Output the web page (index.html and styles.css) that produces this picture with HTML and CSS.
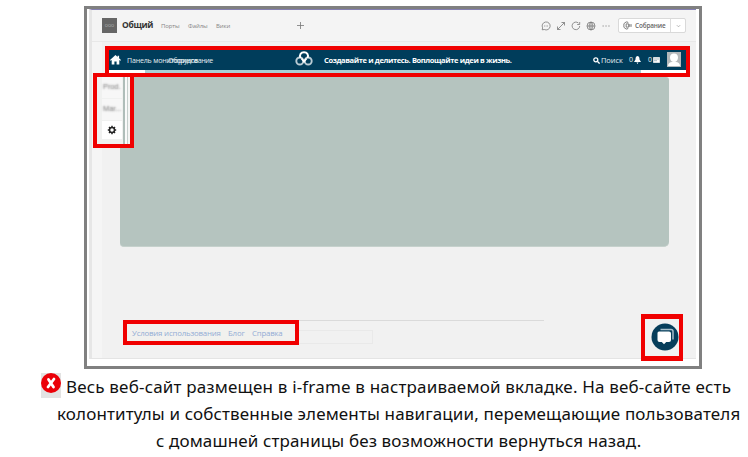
FILE: index.html
```html
<!DOCTYPE html>
<html lang="ru">
<head>
<meta charset="utf-8">
<title>Общий</title>
<link rel="stylesheet" href="styles.css">
</head>
<body>
<figure class="figure">
  <div class="frame">
    <div class="app">
      <header class="topbar">
        <div class="channel-icon">ООО</div>
        <h1 class="channel">Общий</h1>
        <nav class="tabs"><span class="tab-posts">Порты</span><span class="tab-files">Файлы</span><span class="tab-wiki">Вики</span></nav>
        <svg class="plus" viewBox="0 0 7 7"><path d="M3.5 0v7M0 3.5h7"/></svg>
        <div class="tools">
          <svg viewBox="0 0 10 10"><path d="M1.2 8.8l.4-2A4 4 0 1 1 3.3 8.500zM3.2 5h.8M4.700 5h.8M6.200 5h.8"/></svg>
          <svg viewBox="0 0 10 10"><path d="M1.5 8.500l7-7M5.500 1.500h3v3M1.500 5.500v3h3"/></svg>
          <svg viewBox="0 0 10 10"><path d="M8.700 5a3.800 3.800 0 1 1-1.300-3M8.700 1v2.500H6.200"/></svg>
          <svg viewBox="0 0 10 10"><path d="M5 1a4 4 0 1 0 0 8 4 4 0 0 0 0-8zM1 5h8M5 1v8M5 1C2.500 3 2.500 7 5 9M5 1c2.500 2 2.500 6 0 8"/></svg>
          <svg viewBox="0 0 10 10"><path d="M1.500 5h1.300M4.400 5h1.300M7.300 5h1.300"/></svg>
        </div>
        <div class="meet">
          <div class="meet-main"><svg viewBox="0 0 10 10"><path d="M5.500 2V1.300L3.500 1 1 3v4l2.500 2 2-.5V8M3.500 3.200h2.800v3.600H3.500zM7.500 3.500v3M9 3.500v3"/></svg>Собрание</div>
          <div class="meet-more"><svg viewBox="0 0 6 4"><path d="M1 1l2 2 2-2"/></svg></div>
        </div>
      </header>
      <main class="site">
        <div class="navbar">
          <svg class="home" viewBox="0 0 11 10"><path d="M5.500 0L0 5l.7.8 1-.8v4.500h2.700v-3h2.200v3h2.700V5l1 .8.7-.8-1.900-1.700V.8H7.600v1.100z"/></svg>
          <div class="links"><span class="link-panel">Панель мониторинга</span><span class="link-gear">Оборудование</span></div>
          <svg class="knot" viewBox="0 0 18 15"><circle cx="4.800" cy="10" r="3.500"/><circle cx="13.200" cy="10" r="3.500"/><path class="top" d="M5.500 7C4 3.500 6 1.300 9 1.300S14 3.500 12.500 7M6.500 7.500L9 10.500l2.500-3"/></svg>
          <strong class="slogan">Создавайте и делитесь. Воплощайте идеи в жизнь.</strong>
          <div class="status">
            <svg class="search-icon" viewBox="0 0 7 7"><path d="M4.500 4.500L6.600 6.600"/><circle cx="2.800" cy="2.800" r="2"/></svg>
            <span class="search">Поиск</span>
            <span class="count">0</span>
            <svg class="bell" viewBox="0 0 7 8"><path d="M3.500 0C1.500.5 1.500 2 1.500 3.500L0 6h7L5.500 3.500C5.500 2 5.500.5 3.500 0zM2.500 6.500h2L3.500 8z"/></svg>
            <span class="count">0</span>
            <svg class="mail" viewBox="0 0 7 6"><rect width="7" height="6"/><path d="M1 2h5M1 3.700h3"/></svg>
            <svg class="avatar" viewBox="0 0 14 15"><path fill="#b4b8ba" d="M0 0h14v15H0z"/><path fill="#fff" d="M3 5.500C3 3 4.500 1.500 7 1.500S11 3 11 5.500 9.500 10 7 10 3 8 3 5.500zM1 14c0-2.500 2-4 4-4h4c2 0 4 1.500 4 4z"/></svg>
          </div>
        </div>
        <div class="strip"></div>
        <div class="body">
          <aside class="rail">
            <div class="rail-item blurred">Prod.</div>
            <div class="rail-item blurred">Mar...</div>
            <div class="rail-item active"><svg viewBox="0 0 10 10"><path d="M5 .8v8.400M.8 5h8.400M2 2l6 6M8 2L2 8"/><circle cx="5" cy="5" r="2.500"/></svg></div>
          </aside>
          <div class="hero"></div>
        </div>
        <div class="divider"></div>
        <footer class="footer">
          <nav class="footer-links"><span class="terms">Условия использования</span><span class="blog">Блог</span><span class="help">Справка</span></nav>
          <div class="field"></div>
        </footer>
      </main>
    </div>
    <svg class="chat" viewBox="0 0 28 28"><circle cx="14" cy="14" r="13.500" fill="#073e5b"/><path d="M9.500 6.500h10.500a2 2 0 0 1 2 2v8" fill="none" stroke="#a9bfca" stroke-width="1.500"/><path d="M8 8.500h10a2 2 0 0 1 2 2v6.500a2 2 0 0 1-2 2h-2.800L13 21.300 10.800 19H8.500a2 2 0 0 1-2-2v-7a1.500 1.500 0 0 1 1.500-1.500z" fill="#fff"/></svg>
    <div class="mark mark-header"></div>
    <div class="mark mark-rail"></div>
    <div class="mark mark-footer"></div>
    <div class="mark mark-chat"></div>
  </div>
  <figcaption class="caption">
    <div class="line line-1"><svg class="error" viewBox="0 0 20 25"><path d="M0 0h20v25H0z" fill="#e3e3e3"/><circle cx="10" cy="10" r="10" fill="#eb0008"/><path d="M7.500 6.500l5 7.500M13 6L7 14" stroke="#fff" stroke-width="2.800" stroke-linecap="round"/></svg><span>Весь веб-сайт размещен в i-frame в настраиваемой вкладке. На веб-сайте есть</span></div>
    <div class="line line-2"><span>колонтитулы и собственные элементы навигации, перемещающие пользователя</span></div>
    <div class="line line-3"><span>с домашней страницы без возможности вернуться назад.</span></div>
  </figcaption>
</figure>
</body>
</html>
```
FILE: styles.css
```css
* { box-sizing: border-box; }
body { margin: 0; width: 748px; height: 457px; overflow: hidden; background: #fff; font-family: "Open Sans", "Noto Sans", sans-serif; }
svg { display: block; flex: none; fill: none; }
span { white-space: nowrap; }
.figure { margin: 0; padding-top: 6px; }
.frame { position: relative; width: 618px; height: 363px; margin-left: 84px; padding-left: 2px; border: 3px solid #808080; }
.app { width: 607px; height: 350px; background: linear-gradient(90deg, #f5f5f5 10px, #f1f1f1 10px); border-top: 1px solid #8580b2; border-left: 3px solid #e6e6e6; border-bottom: 1px solid #e4e4e4; }

.topbar { display: flex; align-items: center; height: 32px; padding-left: 10px; background: #f4f4f4; border-bottom: 1px solid #e8e8e8; }
.channel-icon { width: 15px; height: 15px; margin-top: -1px; background: #666; color: #bbb; font-size: 4px; line-height: 15px; text-align: center; }
.channel { width: 39px; margin: 0 0 1px 5px; font-size: 8.500px; font-weight: 700; line-height: 14px; color: #333; letter-spacing: -.3px; }
.tabs { display: flex; width: 136px; font-size: 6px; line-height: 10px; color: #858585; letter-spacing: -.1px; }
.tab-posts { width: 27px; }
.tab-files { width: 28px; }
.plus { width: 7px; height: 7px; stroke: #777; stroke-width: .8; }
.tools { display: flex; gap: 5px; margin-left: 237px; }
.tools svg { width: 10px; height: 10px; stroke: #777; stroke-width: .8; }
.meet { display: flex; width: 68px; height: 15px; margin-left: 7px; border: 1px solid #d9d9d9; border-radius: 2px; background: #fff; }
.meet-main { display: flex; align-items: center; width: 52px; padding-left: 4px; gap: 3px; font-size: 6.400px; font-weight: 600; letter-spacing: -.15px; color: #666; border-right: 1px solid #ddd; }
.meet-main svg { width: 9px; height: 9px; stroke: #666; stroke-width: .9; }
.meet-more { display: grid; place-items: center; flex: 1; }
.meet-more svg { width: 5px; height: 4px; stroke: #888; stroke-width: .7; }

.site { padding-top: 8px; }
.navbar { display: flex; align-items: center; width: 577px; height: 20px; margin-left: 17px; padding-left: 1px; background: #003d5b; color: #e6eef2; }
.home { width: 11px; height: 10px; fill: #fff; }
.links { display: flex; width: 174px; padding: 2px 0 0 6px; font-size: 7px; line-height: 12px; }
.link-panel { width: 41px; letter-spacing: -.15px; }
.link-gear { letter-spacing: -.5px; }
.knot { width: 18px; height: 15px; margin-top: -4px; stroke: #b9cbd4; stroke-width: 1.900; }
.knot .top { stroke: #fff; }
.slogan { width: 270px; margin-left: 11px; font-size: 7.500px; line-height: 14px; color: #fff; letter-spacing: -.37px; white-space: nowrap; }
.status { display: flex; align-items: center; margin-left: -1px; font-size: 7px; line-height: 12px; }
.search-icon { width: 7px; height: 7px; margin-right: 1px; stroke: #fff; stroke-width: 1.300; }
.search { width: 28px; font-size: 7.500px; letter-spacing: -.1px; }
.count { width: 5px; }
.bell { width: 7px; height: 8px; margin-right: 7px; fill: #fff; }
.mail { width: 7px; height: 6px; margin-right: 7px; fill: #fff; stroke: #6b8a9b; stroke-width: .6; }
.avatar { width: 14px; height: 15px; margin-top: -1px; }
.strip { width: 577px; height: 3px; margin-left: 17px; background: linear-gradient(90deg, #fff 36px, #abd0d5 36px 532px, #fff 532px); }
.body { display: grid; grid-template-columns: 28px 549px; height: 247px; padding: 4px 0 0 0; }
.rail { z-index: 1; grid-area: 1 / 1; display: flex; flex-direction: column; gap: 1px; width: 34px; height: 69px; margin-left: 5px; padding: 0 9px 0 5px; background: linear-gradient(90deg, #f0f1f0 26px, #afbdb9 26px 28px, #fafafa 28px 30px, #c5cfcc 30px 31px, #f4f5f4 31px); }
.rail-item { width: 20px; height: 21px; padding-left: 1px; background: #f7f7f7; font: 7.500px/20px "Liberation Sans", sans-serif; letter-spacing: -.1px; }
.blurred { color: transparent; text-shadow: 0 0 2px #777; }
.rail-item.active { display: grid; place-items: center; height: 18px; padding: 0; background: #fff; }
.rail-item svg { width: 10px; height: 10px; stroke: #252525; stroke-width: 1.500; }
.rail-item circle { fill: #fff; }
.hero { grid-area: 1 / 2; height: 170px; border-radius: 0 3px 5px 4px; background: #b5c4bf; border-bottom: 1px solid #c5d1cc; }
.divider { width: 420px; height: 1px; margin-left: 32px; background: #dadada; }
.footer { display: flex; height: 24px; padding: 3px 0 0 35px; }
.footer-links { display: flex; width: 167px; height: 17px; padding-left: 5px; font: 7.800px/19px "Open Sans", sans-serif; letter-spacing: -.17px; color: #92acd5; background: #f1f1ee; }
.terms { width: 96px; }
.blog { width: 24px; }
.field { width: 79px; height: 14px; margin-top: 6px; border: 1px solid #e9e9e9; border-left: 0; }

.chat { position: absolute; left: 564px; top: 314px; width: 28px; height: 28px; }
.mark { position: absolute; z-index: 2; border: 4px solid #f00000; }
.mark-header { left: 18px; top: 37px; width: 585px; height: 31px; }
.mark-rail { left: 6px; top: 64px; width: 41px; height: 75px; }
.mark-footer { left: 36px; top: 311px; width: 176px; height: 25px; }
.mark-chat { left: 554px; top: 305px; width: 42px; height: 47px; border-width: 5px 4px; }

.caption { color: #111; font: 17px/27px "Noto Sans", sans-serif; }
.line { display: flex; height: 27px; }
.line-1 { padding-left: 41px; margin-top: 4px; letter-spacing: .175px; }
.line-2 { padding-left: 57px; letter-spacing: .135px; }
.line-3 { padding-left: 156px; letter-spacing: .12px; }
.error { width: 20px; height: 25px; margin-right: 5px; }
```
